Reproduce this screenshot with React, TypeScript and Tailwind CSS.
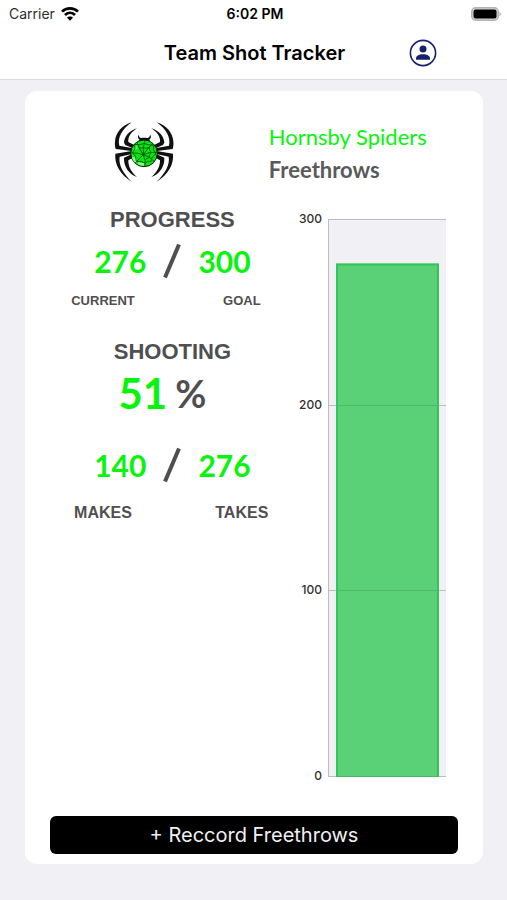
const CHART = { max: 300, value: 276, top: 13, height: 557, left: 33, right: 151 };
const TICKS = [300, 200, 100, 0];

function yFor(value: number) {
  return CHART.top + CHART.height * (1 - value / CHART.max);
}

function WifiIcon() {
  return (
    <svg className="h-[14px] w-[18px]" viewBox="0 0 54 42" fill="none" aria-hidden="true">
      <path d="M3 14C16 1 38 1 51 14" stroke="#000" strokeWidth="8" />
      <path d="M12 24C20 15 34 15 42 24" stroke="#000" strokeWidth="8" />
      <path d="M27 41L18 32C22 27 32 27 36 32Z" fill="#000" />
    </svg>
  );
}

function BatteryIcon() {
  return (
    <svg className="h-[14px] w-[30px]" viewBox="0 0 30 14" aria-hidden="true">
      <rect x="0.7" y="0.7" width="26.6" height="12.6" rx="4" fill="#d4d4d4" stroke="#b3b3b3" strokeWidth="1.4" />
      <rect x="2.5" y="2.5" width="23" height="9" rx="2" fill="#000" />
      <path d="M28.4 4.8C30.3 5.6 30.3 8.4 28.4 9.2Z" fill="#b3b3b3" />
    </svg>
  );
}

function ProfileIcon() {
  return (
    <svg className="h-7 w-7" viewBox="0 0 28 28" aria-hidden="true">
      <circle cx="14" cy="14" r="12.6" fill="none" stroke="#17206f" strokeWidth="1.6" />
      <circle cx="14" cy="9.9" r="3.5" fill="#17206f" />
      <path d="M7 20.7V19.5C7 16.7 10.4 15.3 14 15.3S21 16.7 21 19.5V20.7Z" fill="#17206f" />
    </svg>
  );
}

function SpiderLegs() {
  return (
    <g fill="#111">
      <path d="M96 37C67 46 48 68 46 94C45 104 46 111 48 117L96 123V114L59 107C53 84 66 58 96 37Z" />
      <path d="M112 55C88 62 74 80 73 98L77 105L98 114L105 106L86 96C84 81 95 66 112 55Z" />
      <path d="M96 123L47 131C44 163 61 193 97 216C69 188 56 164 60 140L97 132Z" />
      <path d="M97 132L73 143C72 169 86 191 112 201C95 187 86 171 86 151L102 142Z" />
    </g>
  );
}

function SpiderLogo() {
  return (
    <svg className="h-16 w-[62px]" viewBox="40 30 186 192" role="img" aria-label="Hornsby Spiders logo">
      <SpiderLegs />
      <g transform="translate(267 0) scale(-1 1)">
        <SpiderLegs />
      </g>
      <path
        d="M126 91C115 88 112 81 117 74C117 81 121 84 128 84H140C147 84 151 81 151 74C157 81 153 88 143 91Z"
        fill="#111"
      />
      <path d="M117 94C119 84 127 83 134 83S149 84 151 94Z" fill="#111" />
      <circle cx="133" cy="130" r="40" fill="#08e610" stroke="#111" strokeWidth="3" />
      <path d="M97 141C104 140 110 143 113 150L110 160C102 156 98 149 97 141Z" fill="#8df78f" />
      <path d="M116 157L134 160L132 167C124 167 118 165 114 161Z" fill="#8df78f" />
      <path d="M102 111L115 103L113 118L101 121Z" fill="#4ff054" />
      <g fill="none" stroke="#0b4a0e" strokeWidth="2.5">
        <path d="M131 134Q117 115 112 97M131 134Q129 110 136 91M131 134Q143 114 160 101M131 134Q153 124 172 127M131 134Q152 140 163 154M131 134Q139 150 136 169M131 134Q118 145 107 159M131 134Q112 127 94 129" />
        <path d="M105 103Q122 108 133 100Q146 107 161 105Q158 118 169 132Q155 139 154 155Q144 150 137 160Q126 152 110 154Q111 138 99 128Q109 117 105 103" />
        <path d="M118 113Q126 116 131 113Q141 117 149 112Q149 122 155 128Q147 135 148 143Q142 142 138 149" />
      </g>
    </svg>
  );
}

type StatPairProps = {
  left: number;
  right: number;
  leftLabel: string;
  rightLabel: string;
  large?: boolean;
};

function StatPair({ left, right, leftLabel, rightLabel, large }: StatPairProps) {
  return (
    <div>
      <div className="flex h-10 items-center justify-center gap-4 font-['Lato',sans-serif] text-[30px] font-bold text-[#08f40c]">
        <span>{left}</span>
        <svg className="h-9 w-5" viewBox="0 0 20 36" role="img" aria-label="of">
          <path d="M3 34.5L17 1.5" stroke="#4f4f51" strokeWidth="4" />
        </svg>
        <span>{right}</span>
      </div>
      <div
        className={
          large
            ? "mt-4 flex justify-between text-center text-base font-bold leading-6"
            : "mt-2 flex justify-between text-center text-[13px] font-bold leading-6"
        }
      >
        <span className="w-[106px]">{leftLabel}</span>
        <span className="w-[106px]">{rightLabel}</span>
      </div>
    </div>
  );
}

function ProgressChart() {
  const barTop = yFor(CHART.value);
  const bottom = yFor(0);
  const barLeft = CHART.left + 8;
  const barRight = CHART.right - 7;
  return (
    <svg className="h-[580px] w-[152px]" viewBox="0 0 152 580" role="img" aria-label="276 of 300 shots">
      <rect x={CHART.left} y={CHART.top} width={CHART.right - CHART.left} height={CHART.height} fill="#f0f0f5" />
      {TICKS.map((tick) => (
        <g key={tick}>
          <line
            x1={CHART.left}
            x2={CHART.right}
            y1={Math.round(yFor(tick)) + 0.5}
            y2={Math.round(yFor(tick)) + 0.5}
            stroke="#bdbdc1"
          />
          <text
            x="27"
            y={Math.round(yFor(tick)) + 4}
            textAnchor="end"
            className="fill-[#303032] font-['Inter',sans-serif] text-xs font-medium"
          >
            {tick}
          </text>
        </g>
      ))}
      <line x1={CHART.left + 0.5} x2={CHART.left + 0.5} y1={CHART.top} y2={bottom} stroke="#bdbdc1" />
      <rect x={barLeft} y={barTop} width={barRight - barLeft} height={bottom - barTop} fill="#5bd177" />
      <path
        d={`M${barLeft + 1} ${bottom + 0.5}V${barTop + 1}H${barRight - 1}V${bottom + 0.5}`}
        fill="none"
        stroke="#36c35b"
        strokeWidth="2"
      />
      {[200, 100].map((tick) => (
        <line
          key={tick}
          x1={barLeft}
          x2={barRight}
          y1={Math.round(yFor(tick)) + 0.5}
          y2={Math.round(yFor(tick)) + 0.5}
          stroke="#4fba69"
        />
      ))}
      <line x1={barLeft} x2={barRight} y1={bottom + 0.5} y2={bottom + 0.5} stroke="#46b864" />
    </svg>
  );
}

export default function App() {
  return (
    <div className="min-h-screen bg-[#f0f0f5] font-['Inter',sans-serif] text-black">
      <header className="border-b border-[#dcdcde] bg-white">
        <div className="grid h-7 grid-cols-3 items-center pl-[9px] pr-[6px] text-sm">
          <div className="flex items-center gap-[6px] text-[#2c2c2e]">
            <span>Carrier</span>
            <WifiIcon />
          </div>
          <span className="text-center font-semibold">6:02 PM</span>
          <div className="flex justify-end">
            <BatteryIcon />
          </div>
        </div>
        <div className="grid h-[51px] grid-cols-[1fr_auto_1fr] items-center pb-[2px] pl-[2px]">
          <span />
          <h1 className="text-xl font-semibold">Team Shot Tracker</h1>
          <button type="button" aria-label="Profile" className="ml-16 w-7">
            <ProfileIcon />
          </button>
        </div>
      </header>

      <main className="ml-[25px] mr-6 mt-[11px] rounded-xl bg-white px-[25px] pb-[10px] pt-[29px]">
        <div className="flex items-start">
          <div className="flex w-[60%] flex-col text-[#4f4f51]">
            <div className="flex h-[76px] justify-center pr-14">
              <SpiderLogo />
            </div>
            <section className="font-['Liberation_Sans',Arial,sans-serif]">
              <h2 className="mt-2 text-center text-[22px] font-bold leading-8">PROGRESS</h2>
              <div className="mt-[5px]">
                <StatPair left={276} right={300} leftLabel="CURRENT" rightLabel="GOAL" />
              </div>
            </section>
            <section className="mt-[23px] font-['Liberation_Sans',Arial,sans-serif]">
              <h2 className="text-center text-[22px] font-bold leading-8">SHOOTING</h2>
              <p className="flex h-[50px] items-center justify-center gap-2 pr-5 font-['Lato',sans-serif] font-bold">
                <span className="text-[42px] text-[#08f40c]">51</span>
                <span className="text-[38px]">%</span>
              </p>
              <div className="mt-[27px]">
                <StatPair left={140} right={276} leftLabel="MAKES" rightLabel="TAKES" large />
              </div>
            </section>
          </div>
          <div className="flex-1">
            <div className="-ml-[26px] h-[86px] whitespace-nowrap font-['Lato',sans-serif] text-[22px] leading-[33px]">
              <p className="text-[#08f40c]">Hornsby Spiders</p>
              <p className="font-bold text-[#5a5a5c]">Freethrows</p>
            </div>
            <ProgressChart />
          </div>
        </div>
        <button type="button" className="mt-[30px] h-[38px] w-full rounded-md bg-black text-xl text-[#f0f0f0]">
          + Reccord Freethrows
        </button>
      </main>
    </div>
  );
}
